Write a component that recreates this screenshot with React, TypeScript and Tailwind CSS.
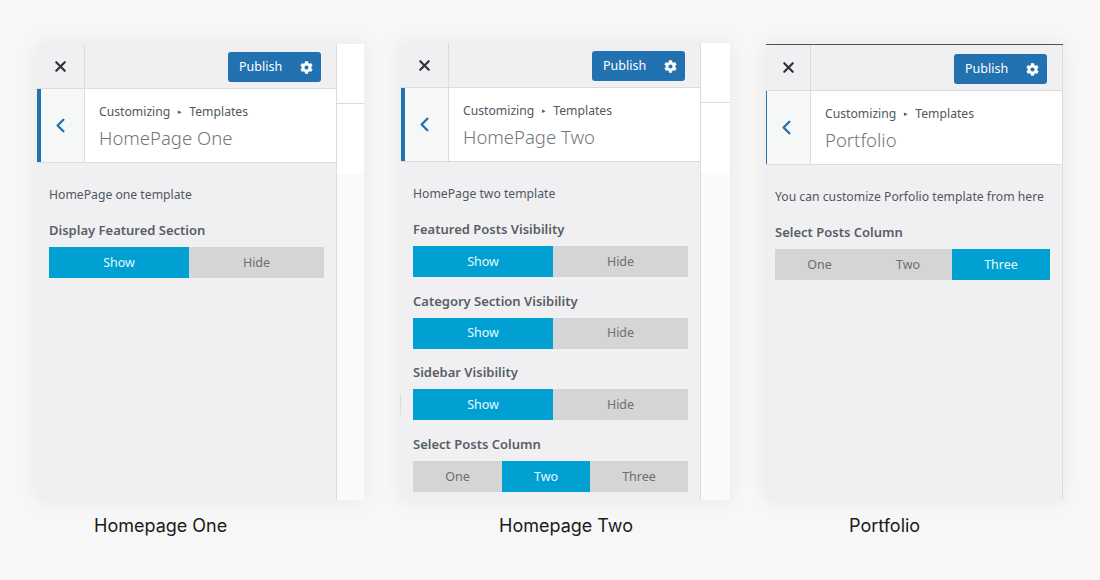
import React from 'react';
import { X, ChevronLeft } from 'lucide-react';
import { FaCog } from 'react-icons/fa';

type Option = { label: string; width: string; active?: boolean };
type Group = { label: string; options: Option[] };

const showHide: Option[] = [
  { label: 'Show', width: 'w-[140px]', active: true },
  { label: 'Hide', width: 'w-[135px]' },
];

// One panel of the customizer sidebar
const Panel: React.FC<{
  title: string;
  description: string;
  groups: Group[];
  accent: string;
  top: string;
  sidebar: string;
  cell: string;
  bar: string;
  barPad: string;
  inset: string;
  strip: boolean;
}> = ({ title, description, groups, accent, top, sidebar, cell, bar, barPad, inset, strip }) => (
  <div className={`flex h-full bg-[#fafafa] shadow-[0_0_18px_rgba(0,0,0,0.07)] ${top}`}>
    <div className={`flex flex-col shrink-0 bg-[#f0f0f2] ${sidebar}`}>
      {/* Top bar */}
      <div className={`shrink-0 flex border-b border-[#dcdcde] ${bar}`}>
        <div className={`h-full shrink-0 flex items-center justify-center border-r border-[#dcdcde] ${cell}`}>
          <X className="h-[17px] w-[17px] text-[#2c3338]" strokeWidth={3} />
        </div>
        <div className={`flex-1 flex justify-end items-start pr-[15px] ${barPad}`}>
          <div className="h-[30px] w-[93px] rounded-[3px] bg-[#2271b1] text-white flex items-center justify-between pl-[11px] pr-[8px] text-[12.5px]">
            <span>Publish</span>
            <FaCog className="h-[13px] w-[13px]" />
          </div>
        </div>
      </div>

      {/* Section title */}
      <div className="h-[74px] shrink-0 flex bg-white border-b border-[#dcdcde]">
        <div className={`h-full shrink-0 flex items-center justify-center bg-[#f6f7f7] border-r border-[#dcdcde] pr-[5px] ${cell} ${accent}`}>
          <ChevronLeft className="h-[23px] w-[23px] text-[#2271b1]" strokeWidth={2.5} />
        </div>
        <div className="pl-[14px] pt-[14px] text-[#50575e]">
          <div className="flex items-center h-[18px] text-[12.2px]">
            <span>Customizing</span>
            <span className="mx-[7.5px] text-[7px] text-[#50575e]">▸</span>
            <span>Templates</span>
          </div>
          <div className="mt-[3px] text-[18.5px] leading-[28px] font-light text-[#72777c]">{title}</div>
        </div>
      </div>

      {/* Controls */}
      <div className={`pt-[22px] ${inset}`}>
        <p className="h-[20px] text-[12.2px] leading-[20px] text-[#50575e] whitespace-nowrap">{description}</p>
        <div className="mt-[15px] flex flex-col gap-[13.67px]">
          {groups.map((g) => (
            <div key={g.label}>
              <div className="h-[20px] mb-[7px] text-[13px] leading-[20px] font-semibold text-[#585e65]">{g.label}</div>
              <div className="flex h-[31px] bg-[#d5d5d5]">
                {g.options.map((o) => (
                  <div
                    key={o.label}
                    className={`flex items-center justify-center pt-px text-[12.5px] ${o.width} ${
                      o.active ? 'bg-[#00a0d2] text-[#e8f8ff]' : 'text-[#6b6f73]'
                    }`}
                  >
                    {o.label}
                  </div>
                ))}
              </div>
            </div>
          ))}
        </div>
      </div>
    </div>

    {/* Preview strip */}
    {strip && (
      <div className="flex-1 border-l border-[#dcdcde]">
        <div className="h-[60px] bg-white border-b border-[#dcdcde]" />
        <div className="h-[70px] bg-white" />
      </div>
    )}
  </div>
);

const App: React.FC = () => (
  <div className="w-[1100px] h-[580px] overflow-hidden bg-[#f7f7f7] flex items-start pl-[37px] pt-[43px] font-['Noto_Sans','Open_Sans',sans-serif]">
    <div className="w-[327px] shrink-0 mt-px">
      <div className="h-[456px]">
        <Panel
          title="HomePage One"
          description="HomePage one template"
          accent="border-l-4 border-l-[#2271b1]"
          top=""
          sidebar="w-[299px]"
          cell="w-[48px]"
          bar="h-[45px]"
          barPad="pt-[8px]"
          inset="pl-[12px] pr-[12px]"
          strip
          groups={[{ label: 'Display Featured Section', options: showHide }]}
        />
      </div>
      <div className="ml-[57px] mt-[14px] text-[18px] leading-[24px] text-[#1a1a1a] font-['Inter',sans-serif]">Homepage One</div>
    </div>

    <div className="relative w-[329px] shrink-0 ml-[37px]">
      <div className="h-[457px]">
        <Panel
          title="HomePage Two"
          description="HomePage two template"
          accent="border-l-4 border-l-[#2271b1]"
          top=""
          sidebar="w-[299px]"
          cell="w-[48px]"
          bar="h-[45px]"
          barPad="pt-[8px]"
          inset="pl-[12px] pr-[12px]"
          strip
          groups={[
            { label: 'Featured Posts Visibility', options: showHide },
            { label: 'Category Section Visibility', options: showHide },
            { label: 'Sidebar Visibility', options: showHide },
            {
              label: 'Select Posts Column',
              options: [
                { label: 'One', width: 'w-[89px]' },
                { label: 'Two', width: 'w-[88px]', active: true },
                { label: 'Three', width: 'w-[98px]' },
              ],
            },
          ]}
        />
      </div>
      {/* faint scroll mark on the panel's left edge */}
      <div className="absolute -left-px top-[352px] h-[20px] w-px bg-[#dcdcdc]" />
      <div className="ml-[98px] mt-[14px] text-[18px] leading-[24px] text-[#1a1a1a] font-['Inter',sans-serif]">Homepage Two</div>
    </div>

    <div className="w-[297px] shrink-0 ml-[36px] mt-px">
      <div className="h-[456px]">
        <Panel
          title="Portfolio"
          description="You can customize Porfolio template from here"
          accent="border-l border-l-[#2271b1]"
          top="border-t border-t-[#555]"
          sidebar="w-[297px] border-r border-r-[#dcdcde]"
          cell="w-[45px]"
          bar="h-[46px]"
          barPad="pt-[9px]"
          inset="pl-[9px] pr-[12px]"
          strip={false}
          groups={[
            {
              label: 'Select Posts Column',
              options: [
                { label: 'One', width: 'w-[89px]' },
                { label: 'Two', width: 'w-[88px]' },
                { label: 'Three', width: 'w-[98px]', active: true },
              ],
            },
          ]}
        />
      </div>
      <div className="ml-[83px] mt-[14px] text-[18px] leading-[24px] text-[#1a1a1a] font-['Inter',sans-serif]">Portfolio</div>
    </div>
  </div>
);

export default App;
